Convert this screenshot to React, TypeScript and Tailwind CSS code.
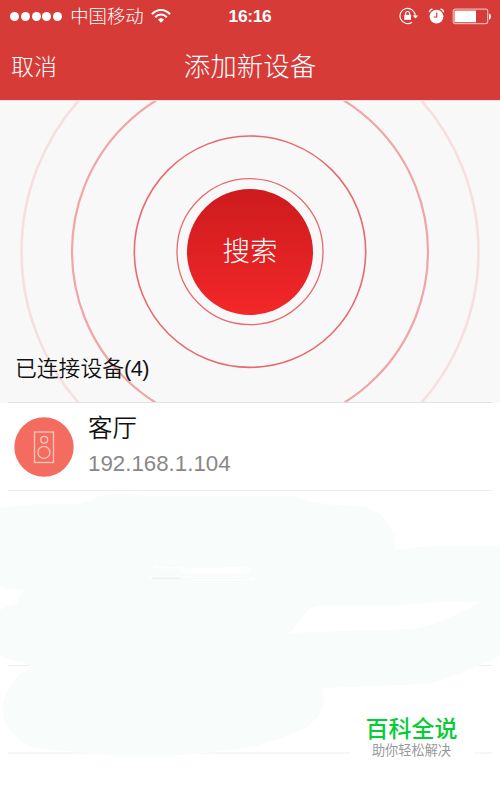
const rings = [
  { r: 73, width: 1.3, color: "#e86a6e" },
  { r: 115.7, width: 1.6, color: "#e86a6e" },
  { r: 178, width: 2.2, color: "#f0a5a7" },
  { r: 228.5, width: 2.6, color: "#f7dfdf" },
];

const StatusBar = () => {
  return (
    <div className="flex h-8 items-center text-white">
      <div className="flex flex-1 items-center pl-[10px]">
        <div className="flex gap-[1.8px]">
          {[0, 1, 2, 3, 4].map((dot) => (
            <span key={dot} className="h-[9px] w-[9px] rounded-full bg-white"></span>
          ))}
        </div>
        <span className="ml-[8px] pt-px text-[18.4px] leading-8 font-light">中国移动</span>
        <svg className="ml-[7px] h-[16px] w-[20px]" viewBox="0 0 20 16" fill="none" stroke="white">
          <path d="M1 6.2C6 .5 14 .5 19 6.2" strokeWidth="2.1" />
          <path d="M4.2 9.2C7.5 5.6 12.5 5.6 15.8 9.2" strokeWidth="2.1" />
          <path d="M7 11.8C8.7 9.8 11.3 9.8 13 11.8L10 14.8Z" fill="white" stroke="none" />
        </svg>
      </div>
      <span className="mr-[2px] font-['Liberation_Sans',sans-serif] text-[17.4px] leading-8 font-bold tracking-[-0.3px]">16:16</span>
      <div className="flex flex-1 items-center justify-end pr-[8px]">
        <svg className="h-[18px] w-[20px]" viewBox="0 0 20 18" fill="none" stroke="white">
          <path d="M16.2 9A7.6 7.6 0 1 0 13 15.2" strokeWidth="1.1" />
          <path d="M13.7 8.4H19.2L16.5 11.6Z" fill="white" stroke="none" />
          <path d="M6.6 8V6.5A2 2 0 0 1 10.6 6.5V8" strokeWidth="1.2" />
          <rect x="5.2" y="7.8" width="6.8" height="5" fill="white" stroke="none" />
        </svg>
        <svg className="ml-[9px] h-[18px] w-[17px]" viewBox="0 0 17 18" fill="none" stroke="white">
          <circle cx="8.5" cy="9.6" r="6.9" fill="white" stroke="none" />
          <path d="M1.4 5.3Q1.6 2.4 4.5 2.1M12.5 2.1Q15.4 2.4 15.6 5.3" strokeWidth="1.3" />
          <path d="M8.8 5.6V10H5.7" stroke="#d63b37" strokeWidth="1.2" />
        </svg>
        <svg className="ml-[7px] h-[17px] w-[40px]" viewBox="0 0 40 17" fill="none">
          <rect x="1.2" y="1.2" width="34.5" height="14.4" rx="2" stroke="#f2b5b2" strokeWidth="1.2" />
          <rect x="2.5" y="2.6" width="21.5" height="11.6" fill="white" />
          <path d="M37 5.5Q39 6 39 8.5T37 11.5Z" fill="white" />
        </svg>
      </div>
    </div>
  );
};

const Header = () => {
  return (
    <header className="h-[100px] bg-[#d63b37] text-white">
      <StatusBar />
      <div className="grid h-[68px] grid-cols-[1fr_auto_1fr] items-center pt-[2px]">
        <button className="pl-[11px] text-left text-[23px] leading-none font-light">取消</button>
        <h1 className="text-[26.5px] leading-none font-light">添加新设备</h1>
        <span></span>
      </div>
    </header>
  );
};

const SearchPanel = () => {
  return (
    <section className="relative h-[303px] overflow-hidden border-t border-[#f3dfdf] bg-[#f8f8f8]">
      <svg className="absolute inset-x-0 -top-px h-[303px] w-[500px]" viewBox="0 100 500 303" fill="none">
        {rings.map((ring) => (
          <circle key={ring.r} cx="250" cy="251.7" r={ring.r} stroke={ring.color} strokeWidth={ring.width} />
        ))}
      </svg>
      <div className="relative flex h-full flex-col">
        <button className="mx-auto mt-[88px] h-[126px] w-[126px] rounded-full bg-linear-to-b from-[#cd1b1e] to-[#f32728] text-[27.5px] font-light text-white">
          搜索
        </button>
        <h2 className="mt-[38px] pl-[15px] text-[21.8px] leading-8 font-[350] text-[#111]">
          已连接设备<span className="tracking-[-0.6px]">(4)</span>
        </h2>
        <div className="mx-2 mt-auto h-px bg-[#e2e2e2]"></div>
      </div>
    </section>
  );
};

const DeviceRow = () => {
  return (
    <div className="mx-2 flex h-[88px] items-center border-b border-[#ebebeb] pl-[6px]">
      <svg className="h-[60px] w-[60px]" viewBox="0 0 60 60" fill="none" stroke="#fcc9c0" strokeWidth="1.3">
        <circle cx="30" cy="30" r="29.7" fill="#f36c5f" stroke="none" />
        <rect x="20.5" y="15" width="19" height="30.5" />
        <circle cx="30.2" cy="22.7" r="3.4" />
        <circle cx="29.9" cy="35.4" r="6" />
      </svg>
      <div className="ml-[14px]">
        <div className="text-[24.5px] leading-[34px] font-[350] text-[#111]">客厅</div>
        <div className="font-['Liberation_Sans',sans-serif] text-[22.3px] leading-[35px] text-[#888]">192.168.1.104</div>
      </div>
    </div>
  );
};

const EmptyRows = () => {
  return (
    <div className="relative h-[298px]">
      <svg className="block h-[298px] w-[500px]" viewBox="0 491 500 298">
        <path d="M8 665.5H492M8 753H492" stroke="#ededed" strokeWidth="1.2" />
        <path
          fill="#f8fcfb"
          fillRule="evenodd"
          d="M0 508Q14 505 30 504.5L80 504Q87 502 97 496.5Q120 492 145 496H291C301 497 305 501 313 502L335 505L365 506C378 510 394 525 395 542V550Q420 546 450 546H500V656Q487 663 475 667Q445 681 425 684Q380 686 321 688Q330 714 300 731Q270 743 250 747Q210 754 160 756Q100 757 70 751Q35 750 24 743L10 730Q1 718 3 705Q5 693 13 682Q18 675 32 667Q27 662 16 661Q5 659 0 654V610Q7 605 16 604L24 590Q5 589 0 586ZM290 633L309 609L318 605.5H400Q430 603 443 602H480Q465 611 450 617Q431 627 410 629Q390 630 368 630Z"
        />
        <path d="M153 565Q175 568 205 568L250 566.5V573.5H182L180 568.5H153Z" fill="white" />
        <path d="M148 576.5H178L252 577.5L255 580H208L178 579H152Z" fill="white" />
        <path d="M152 578.2H180" stroke="#eeecec" strokeWidth="1.2" />
        <path d="M180 578.5H250" stroke="#f7f8f8" />
      </svg>
      <div className="absolute top-[220px] left-[350px] h-11 w-[125px] bg-white pt-[3px] pr-[2px] text-center">
        <div className="text-[23px] leading-[30px] font-medium text-[#06cc35]">百科全说</div>
        <div className="text-[13.2px] leading-[13px] text-[#999]">助你轻松解决</div>
      </div>
    </div>
  );
};

const App = () => {
  return (
    <div className="h-[789px] w-[500px] overflow-hidden bg-white font-['Liberation_Sans','Noto_Sans_CJK_SC',sans-serif]">
      <Header />
      <SearchPanel />
      <DeviceRow />
      <EmptyRows />
    </div>
  );
};

export default App;
